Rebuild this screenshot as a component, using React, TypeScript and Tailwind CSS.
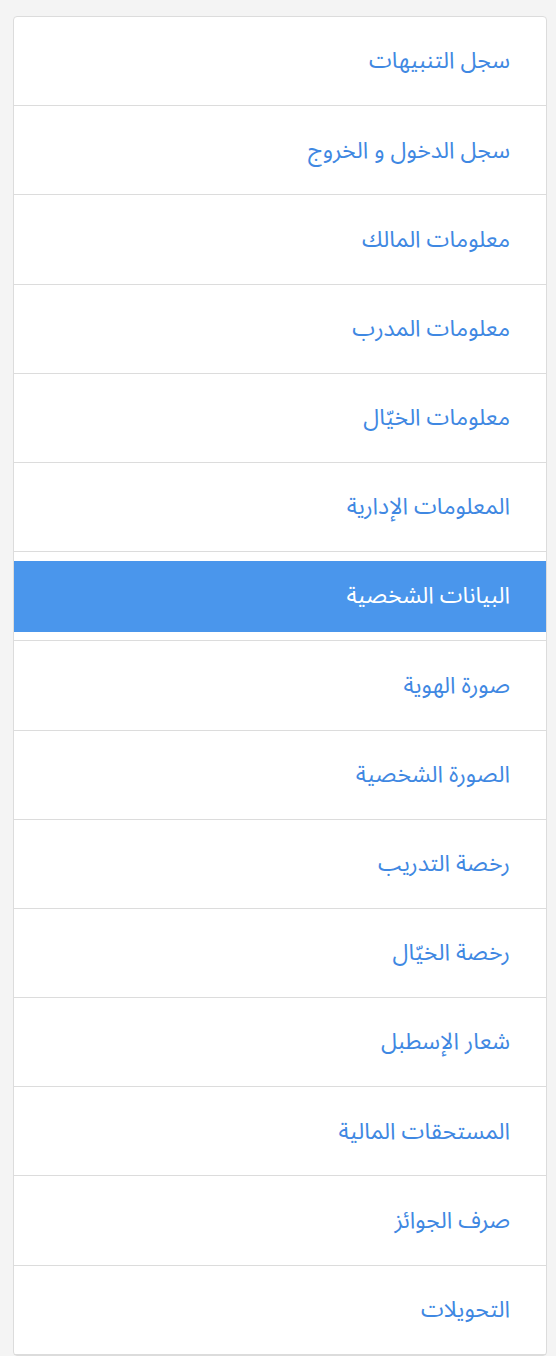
const items = [
  "سجل التنبيهات",
  "سجل الدخول و الخروج",
  "معلومات المالك",
  "معلومات المدرب",
  "معلومات الخيّال",
  "المعلومات الإدارية",
  "البيانات الشخصية",
  "صورة الهوية",
  "الصورة الشخصية",
  "رخصة التدريب",
  "رخصة الخيّال",
  "شعار الإسطبل",
  "المستحقات المالية",
  "صرف الجوائز",
  "التحويلات",
];

const ACTIVE = 6;

export default function App() {
  return (
    <div className="min-h-[1356px] bg-[#f4f4f4] pl-[13px] pr-[9px] pt-[16px]">
      <ul
        dir="rtl"
        className="rounded-[4px] border border-[#dcdcdc] bg-white"
        style={{ fontFamily: '"Noto Sans Arabic", "DejaVu Sans", sans-serif' }}
      >
        {items.map((label, i) => (
          <li key={label} className="border-b border-[#dcdcdc] pt-[9px] pb-[8px]">
            <a
              href="#"
              className={
                "flex h-[71.2px] items-center pr-[36px] text-[23px] " +
                (i === ACTIVE ? "bg-[#4a96ec] text-white" : "text-[#3f88e2]")
              }
            >
              {label}
            </a>
          </li>
        ))}
      </ul>
    </div>
  );
}
